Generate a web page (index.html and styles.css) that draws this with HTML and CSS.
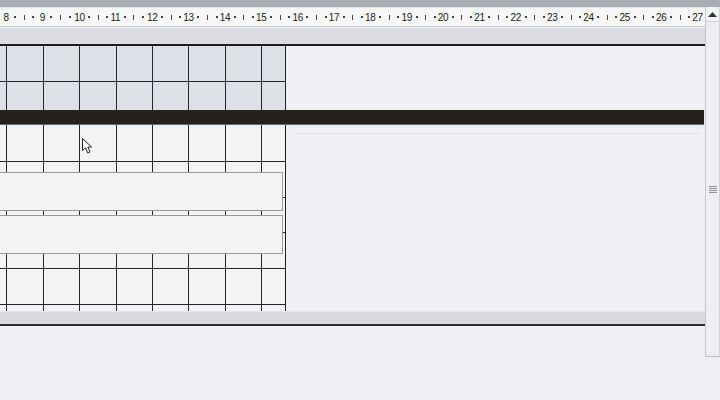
FILE: index.html
```html
<!DOCTYPE html>
<html lang="en">
<head>
  <meta charset="UTF-8" />
  <title>Sheet</title>
  <link rel="stylesheet" href="styles.css">
</head>
<body>
  <div class="topbar"></div>
  <div class="frame">
    <div class="main">
      <div class="ruler">
        <div class="unit"><span class="num">8</span><span class="dot"></span><span class="tick"></span><span class="dot"></span></div>
        <div class="unit"><span class="num">9</span><span class="dot"></span><span class="tick"></span><span class="dot"></span></div>
        <div class="unit"><span class="num">10</span><span class="dot"></span><span class="tick"></span><span class="dot"></span></div>
        <div class="unit"><span class="num">11</span><span class="dot"></span><span class="tick"></span><span class="dot"></span></div>
        <div class="unit"><span class="num">12</span><span class="dot"></span><span class="tick"></span><span class="dot"></span></div>
        <div class="unit"><span class="num">13</span><span class="dot"></span><span class="tick"></span><span class="dot"></span></div>
        <div class="unit"><span class="num">14</span><span class="dot"></span><span class="tick"></span><span class="dot"></span></div>
        <div class="unit"><span class="num">15</span><span class="dot"></span><span class="tick"></span><span class="dot"></span></div>
        <div class="unit"><span class="num">16</span><span class="dot"></span><span class="tick"></span><span class="dot"></span></div>
        <div class="unit"><span class="num">17</span><span class="dot"></span><span class="tick"></span><span class="dot"></span></div>
        <div class="unit"><span class="num">18</span><span class="dot"></span><span class="tick"></span><span class="dot"></span></div>
        <div class="unit"><span class="num">19</span><span class="dot"></span><span class="tick"></span><span class="dot"></span></div>
        <div class="unit"><span class="num">20</span><span class="dot"></span><span class="tick"></span><span class="dot"></span></div>
        <div class="unit"><span class="num">21</span><span class="dot"></span><span class="tick"></span><span class="dot"></span></div>
        <div class="unit"><span class="num">22</span><span class="dot"></span><span class="tick"></span><span class="dot"></span></div>
        <div class="unit"><span class="num">23</span><span class="dot"></span><span class="tick"></span><span class="dot"></span></div>
        <div class="unit"><span class="num">24</span><span class="dot"></span><span class="tick"></span><span class="dot"></span></div>
        <div class="unit"><span class="num">25</span><span class="dot"></span><span class="tick"></span><span class="dot"></span></div>
        <div class="unit"><span class="num">26</span><span class="dot"></span><span class="tick"></span><span class="dot"></span></div>
        <div class="unit"><span class="num">27</span><span class="dot"></span><span class="tick"></span><span class="dot"></span></div>
      </div>

      <div class="band"></div>

      <div class="sheet">
        <div class="section">
          <div class="grid grid-head">
            <div></div><div></div><div></div><div></div><div></div><div></div><div></div><div></div><div></div>
            <div></div><div></div><div></div><div></div><div></div><div></div><div></div><div></div><div></div>
          </div>
          <div class="empty"></div>
        </div>

        <div class="blackbar"></div>

        <div class="section">
          <div class="body-wrap">
            <div class="grid grid-body">
              <div></div><div></div><div></div><div></div><div></div><div></div><div></div><div></div><div></div>
              <div></div><div></div><div></div><div></div><div></div><div></div><div></div><div></div><div></div>
              <div></div><div></div><div></div><div></div><div></div><div></div><div></div><div></div><div></div>
              <div></div><div></div><div></div><div></div><div></div><div></div><div></div><div></div><div></div>
              <div></div><div></div><div></div><div></div><div></div><div></div><div></div><div></div><div></div>
              <div></div><div></div><div></div><div></div><div></div><div></div><div></div><div></div><div></div>
            </div>
            <div class="textbox box-one"></div>
            <div class="textbox box-two"></div>
            <svg class="cursor" width="12" height="17" viewBox="0 0 12 17">
              <path d="M0.5 0.5 L0.5 12.5 L3.5 9.8 L5.8 15 L8 14 L5.8 9 L9.5 9 Z" fill="#fff" stroke="#222" stroke-width="1" stroke-linejoin="round" />
            </svg>
          </div>
          <div class="empty">
            <div class="faint-line"></div>
          </div>
        </div>
      </div>

      <div class="footer-band"></div>
      <div class="bottom"></div>
    </div>

    <div class="scrollbar">
      <div class="scroll-up">
        <svg width="9" height="5" viewBox="0 0 9 5"><path d="M0 5 L4.5 0 L9 5 Z" fill="#333" /></svg>
      </div>
      <div class="track">
        <div class="grip"><span></span><span></span><span></span><span></span></div>
      </div>
    </div>
  </div>
</body>
</html>
```

FILE: styles.css
```css
* {
  box-sizing: border-box;
}

body {
  margin: 0;
  width: 720px;
  height: 400px;
  overflow: hidden;
  background-color: #eef0f3;
  font-family: "Liberation Sans", Arial, sans-serif;
}

.topbar {
  height: 7px;
  background-color: #a9adb4;
}

.frame {
  display: flex;
}

.main {
  width: 705px;
  display: flex;
  flex-direction: column;
}

/* ruler */
.ruler {
  height: 20px;
  display: flex;
  align-items: center;
  padding-left: 1.5px;
  background-color: #f7f7f7;
  border-top: 1px solid #e4e5e8;
  border-bottom: 1px solid #c9cacf;
  overflow: hidden;
}

.unit {
  flex: 0 0 36.37px;
  display: flex;
  align-items: center;
}

.unit > span {
  flex: 0 0 25%;
  display: flex;
  justify-content: center;
}

.num {
  font-size: 10px;
  color: #222;
  letter-spacing: -0.3px;
}

.dot::before {
  content: "";
  width: 2px;
  height: 2px;
  background-color: #444;
}

.tick::before {
  content: "";
  width: 1px;
  height: 5px;
  background-color: #444;
}

.band {
  height: 17px;
  background-color: #dcdde2;
  border-top: 1px solid #eceef0;
}

/* sheet */
.sheet {
  border-top: 2px solid #1e1e1e;
}

.section {
  display: flex;
}

.empty {
  flex: 1;
  position: relative;
}

.grid {
  width: 286px;
  display: grid;
  grid-template-columns: 6px 36px 35px 36px 35px 35px 36px 35px 23px;
  gap: 1px;
  background-color: #262626;
  border-right: 1px solid #1e1e1e;
}

.grid-head {
  grid-template-rows: 35px 28px;
}

.grid-head > div {
  background-color: #dde0e6;
}

.grid-body {
  grid-template-rows: 36px 35px 34px 35px 35px 6px;
}

.grid-body > div {
  background-color: #f2f3f5;
}

.blackbar {
  height: 15px;
  width: 704px;
  background-color: #23221c;
  border-bottom: 1px solid #6a6b6d;
}

.body-wrap {
  position: relative;
}

.textbox {
  position: absolute;
  left: -1px;
  width: 284px;
  height: 39px;
  background-color: #f2f3f5;
  border: 1px solid #9a9a9a;
}

.box-one {
  top: 47px;
}

.box-two {
  top: 90px;
}

.cursor {
  position: absolute;
  left: 82px;
  top: 13px;
}

.faint-line {
  position: absolute;
  left: 10px;
  right: 4px;
  top: 8px;
  height: 1px;
  background-color: #dfe1e5;
}

.footer-band {
  height: 15px;
  background-color: #d9dadf;
  border-top: 1px solid #e6e7ea;
  border-bottom: 2px solid #2b2e33;
}

.bottom {
  flex: 1;
}

/* scrollbar */
.scrollbar {
  width: 15px;
  height: 350px;
  display: flex;
  flex-direction: column;
  background-color: #eceef1;
  border-left: 1px solid #c6c7ca;
  border-right: 1px solid #d3d4d7;
  border-bottom: 1px solid #bfc0c3;
}

.scroll-up {
  height: 15px;
  display: flex;
  align-items: center;
  justify-content: center;
  background-color: #f3f4f6;
  border-bottom: 1px solid #d0d1d4;
}

.track {
  flex: 1;
  display: flex;
  align-items: center;
  justify-content: center;
}

.grip {
  display: flex;
  flex-direction: column;
  gap: 1px;
}

.grip span {
  width: 8px;
  height: 1px;
  background-color: #8d8f94;
}
```
